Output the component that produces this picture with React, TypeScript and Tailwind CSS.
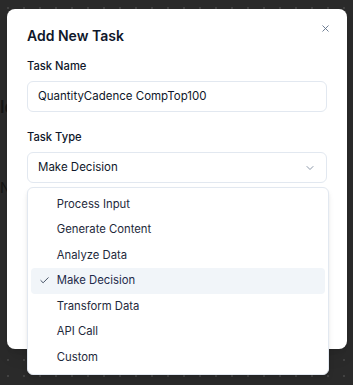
import { Check, ChevronDown, X } from 'lucide-react'

const taskTypes = [
  'Process Input',
  'Generate Content',
  'Analyze Data',
  'Make Decision',
  'Transform Data',
  'API Call',
  'Custom',
]

export default function App() {
  const selected = 'Make Decision'

  return (
    <div className="relative h-[385px] w-[353px] overflow-hidden bg-[#2a2a2a] bg-[radial-gradient(#424242_1px,transparent_1.2px)] bg-[size:16px_16px] font-['Inter',sans-serif]">
      {/* page behind the overlay */}
      <div className="flex flex-col pt-[99px] text-[#151515]">
        <span className="text-[17px] font-semibold leading-[16px]">le</span>
        <span className="mt-[66px] text-[14px] leading-[14px]">N</span>
      </div>

      {/* ── DIALOG ── */}
      <div className="absolute left-[7px] top-[9px] flex h-[340px] w-[340px] flex-col rounded-[8px] bg-white px-[20px] pt-[19px] shadow-lg">
        <button className="absolute right-[16px] top-[14px] text-[#64748b]">
          <X size={11} strokeWidth={2} />
        </button>
        <h2 className="text-[14px] font-semibold leading-[16px] text-[#0f172a]">Add New Task</h2>

        <div className="mt-[14px] flex flex-col gap-[7px]">
          <label className="text-[11.2px] font-medium leading-[16px] text-[#0f172a]">Task Name</label>
          <div className="flex h-[31px] items-center rounded-[6px] border border-[#e2e8f0] px-[10px] text-[11.5px] text-[#0f172a]">
            QuantityCadence CompTop100
          </div>
        </div>

        <div className="mt-[17px] flex flex-col gap-[7px]">
          <label className="text-[11.2px] font-medium leading-[16px] text-[#0f172a]">Task Type</label>
          <div className="flex h-[31px] items-center justify-between rounded-[6px] border border-[#e2e8f0] px-[10px] text-[11.5px] text-[#0f172a]">
            <span>{selected}</span>
            <ChevronDown size={12} strokeWidth={1.5} className="text-[#64748b]" />
          </div>
        </div>
      </div>

      {/* ── SELECT MENU ── */}
      <div className="absolute left-[27px] top-[187px] flex w-[302px] flex-col rounded-[6px] border border-[#e2e8f0] bg-white p-[3.2px] shadow-md">
        {taskTypes.map((t) => (
          <div
            key={t}
            className={`relative flex h-[25.6px] items-center rounded-[4px] pl-[25.6px] text-[11.3px] ${
              t === selected ? 'bg-[#f1f5f9] text-[#1e2a4a]' : 'text-[#1e293b]'
            }`}
          >
            {t === selected && (
              <Check size={11} strokeWidth={2} className="absolute left-[8px] text-[#334155]" />
            )}
            {t}
          </div>
        ))}
      </div>
    </div>
  )
}
